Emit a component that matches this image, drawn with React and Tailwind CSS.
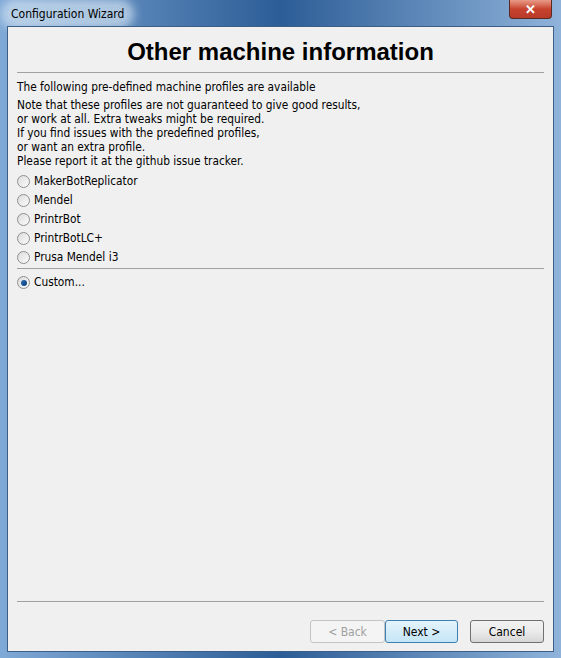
import React from 'react';

const profiles = ['MakerBotReplicator', 'Mendel', 'PrintrBot', 'PrintrBotLC+', 'Prusa Mendel i3'];

const Radio = ({ checked }) => (
  <span className="relative inline-block w-[13px] h-[13px] rounded-full border border-[#8f8f8f] bg-gradient-to-br from-[#dcdcdc] to-[#fbfbfb] shrink-0">
    {checked && (
      <span className="absolute left-[2.5px] top-[2.5px] w-[6px] h-[6px] rounded-full bg-gradient-to-br from-[#2c6fb3] to-[#0c3c7a]" />
    )}
  </span>
);

const Button = ({ children, variant }) => {
  const styles = {
    disabled: 'border-[#c4c4c4] bg-[#f4f4f4] text-[#a0a0a0]',
    default: 'border-[#3c7fb1] bg-gradient-to-b from-[#e5f4fc] to-[#c4e5f6] text-black',
    normal: 'border-[#707070] bg-gradient-to-b from-[#f2f2f2] via-[#ebebeb] to-[#d6d6d6] text-black',
  };
  return (
    <button className={`h-[23px] rounded-[3px] border text-[12px] ${styles[variant]}`}>{children}</button>
  );
};

export default function App() {
  return (
    <div
      className="w-[561px] h-[658px] flex flex-col bg-gradient-to-r from-[#7fa9d6] via-[#2c5d96] to-[#8fb3da] overflow-hidden"
      style={{ fontFamily: '"DejaVu Sans Condensed", "DejaVu Sans", sans-serif' }}
    >
      <div className="h-[26px] flex items-start justify-between pl-[7px] pr-[9px]">
        <span className="mt-[5px] text-[12px] text-black px-1 rounded-full bg-[#cfe0f0]/70 shadow-[0_0_10px_6px_rgba(214,228,243,0.7)]">
          Configuration Wizard
        </span>
        <div className="w-[43px] h-[19px] rounded-b-[4px] border border-t-0 border-[#5a2a22] bg-gradient-to-b from-[#e89a88] via-[#c7432f] to-[#b83a28] flex items-center justify-center">
          <span className="text-white font-bold text-[13px] leading-none" style={{ fontFamily: '"Liberation Sans", sans-serif' }}>✕</span>
        </div>
      </div>
      <div className="flex-1 mx-[7px] mb-[6px] border border-[#3d5f85] bg-[#f0f0f0] flex flex-col px-[9px]">
        <h1
          className="text-center text-[24px] font-bold text-black mt-[11px] leading-[28px]"
          style={{ fontFamily: '"Liberation Sans", Arial, sans-serif' }}
        >
          Other machine information
        </h1>
        <div className="mt-[6px] h-px bg-[#a0a0a0]" />
        <p className="mt-[7px] text-[11.8px] leading-[14px] text-black">The following pre-defined machine profiles are available</p>
        <p className="mt-[4px] text-[11.8px] leading-[14px] text-black">
          Note that these profiles are not guaranteed to give good results,
          <br />
          or work at all. Extra tweaks might be required.
          <br />
          If you find issues with the predefined profiles,
          <br />
          or want an extra profile.
          <br />
          Please report it at the github issue tracker.
        </p>
        <div className="mt-[4px] flex flex-col">
          {profiles.map((p) => (
            <label key={p} className="h-[19px] flex items-center gap-[4px] text-[11.8px] text-black">
              <Radio />
              {p}
            </label>
          ))}
        </div>
        <div className="mt-[1px] h-px bg-[#a0a0a0]" />
        <label className="mt-[4px] h-[19px] flex items-center gap-[4px] text-[11.8px] text-black">
          <Radio checked />
          Custom...
        </label>
        <div className="flex-1" />
        <div className="h-px bg-[#a0a0a0]" />
        <div className="flex justify-end mt-[18px] mb-[8px] pr-0">
          <div className="w-[75px] flex"><Button variant="disabled"><span className="w-[73px] inline-block">&lt; Back</span></Button></div>
          <div className="w-[73px] flex"><Button variant="default"><span className="w-[71px] inline-block">Next &gt;</span></Button></div>
          <div className="w-[74px] ml-[12px] flex"><Button variant="normal"><span className="w-[72px] inline-block">Cancel</span></Button></div>
        </div>
      </div>
    </div>
  );
}
